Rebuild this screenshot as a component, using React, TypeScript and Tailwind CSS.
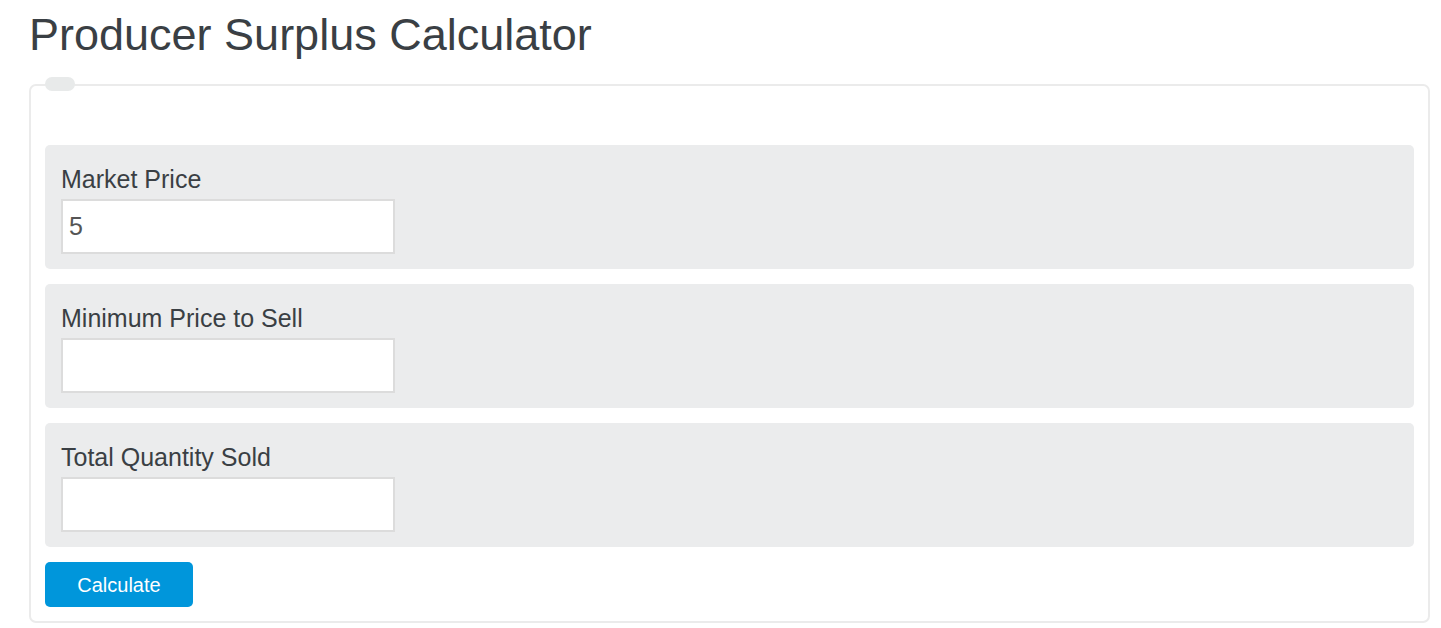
export default function App() {
  const fields = [
    { label: 'Market Price', value: '5' },
    { label: 'Minimum Price to Sell', value: '' },
    { label: 'Total Quantity Sold', value: '' },
  ];

  return (
    <div className="min-h-screen bg-white font-['Liberation_Sans',Arial,sans-serif] text-[#3a3f44]">
      <div className="px-[29px] pt-[9px]">
        <h1 className="text-[45px] leading-[52px] font-normal text-[#3a3f44]">Producer Surplus Calculator</h1>

        <div className="relative mt-[23px] w-[1401px] rounded-[7px] border-2 border-[#ebebeb] px-[14px] pt-[59px] pb-[14px]">
          <div className="absolute left-[14px] -top-[9px] h-[14px] w-[30px] rounded-full bg-[#e8eaea]" />

          <div className="flex flex-col gap-[15px]">
            {fields.map((f) => (
              <div key={f.label} className="h-[124px] rounded-[5px] bg-[#ebeced] px-4 pt-[20px]">
                <label className="block text-[25px] leading-[29px] text-[#3a3f44]">{f.label}</label>
                <input
                  type="text"
                  defaultValue={f.value}
                  className="mt-[5px] block h-[55px] w-[334px] border-2 border-[#dcdcdc] bg-white px-[6px] text-[25px] text-[#555] outline-none"
                />
              </div>
            ))}
          </div>

          <button className="mt-[15px] h-[45px] w-[148px] rounded-[5px] bg-[#0096db] text-[20px] text-white">
            Calculate
          </button>
        </div>
      </div>
    </div>
  );
}
